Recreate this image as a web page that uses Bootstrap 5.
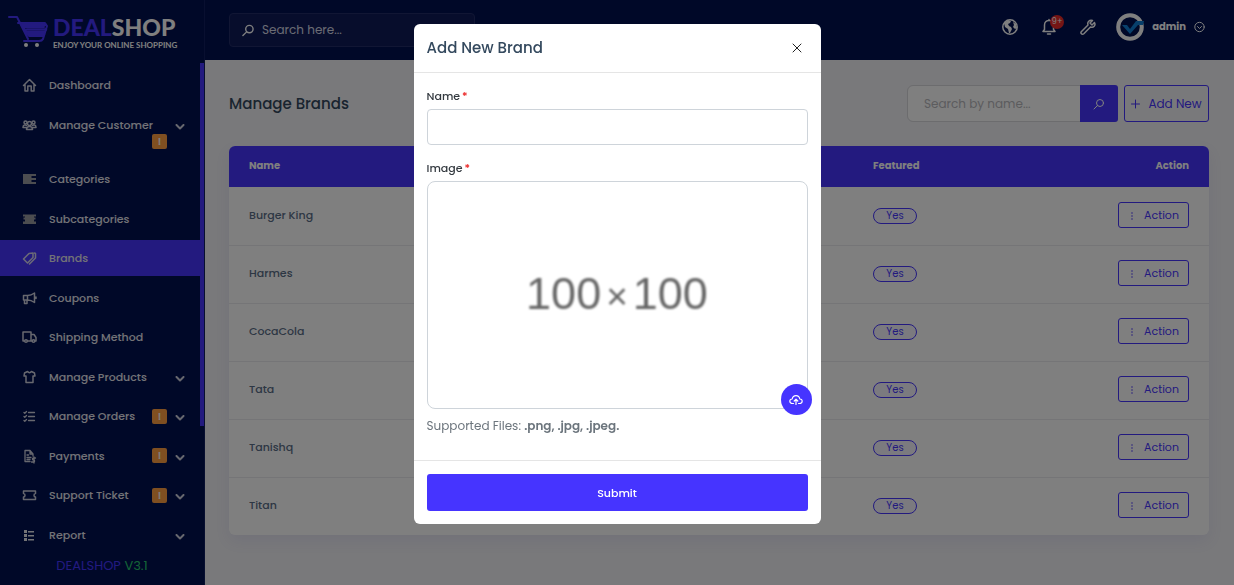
<!DOCTYPE html>
<html lang="en">
<head>
<meta charset="utf-8">
<meta name="viewport" content="width=device-width, initial-scale=1">
<title>DealShop - Manage Brands</title>
<link href="https://cdn.jsdelivr.net/npm/bootstrap@5.3.0/dist/css/bootstrap.min.css" rel="stylesheet">
<style>
:root{--brand:#4634ff;--navy:#001050}
body{font-family:Poppins,Inter,sans-serif;font-size:12px;line-height:20px;background:#f2f2f6;color:#5b6e88}
svg{fill:none;stroke:currentColor;stroke-width:1.5;stroke-linecap:round;stroke-linejoin:round;flex:none}
svg.thin{stroke-width:1}
svg.heavy{stroke-width:2}
.side{width:205px;height:100vh;background:var(--navy);border-right:1px solid #101e60;position:sticky;top:0}
.logo{height:67px;padding:13px 0 0 8px}
.logo svg{color:var(--brand);margin-top:2px}
.logo-name{font:900 23px/28px Lato,sans-serif;color:#fff}
.logo-name span{color:var(--brand)}
.logo-tag{font:700 8px/8px Lato,sans-serif;color:#fff;white-space:nowrap}
.menu{width:200px;list-style:none}
.menu a{padding:9px 15px 9px 22px;font-size:11px;font-weight:500;line-height:18px;color:#e6e6ee;text-decoration:none}
.menu a>span{width:122px}
.menu .active{background:var(--brand)}
.menu svg{opacity:.9}
.alert-dot{width:15px;height:15px;line-height:15px;background:#ff9f43;color:#fff;border-radius:2px;font-size:10px;font-weight:600;text-align:center}
.rail{right:0;top:63px;width:4px;height:62%;background:var(--brand)}
.version{height:32px;line-height:26px;font-size:13px;color:var(--brand)}
.version span{color:#28c76f}
.topbar{height:60px;background:var(--navy);padding:0 29px 0 24px;color:#fff}
.top-search{width:246px;height:34px;background:#0e1a58;border:1px solid #222d68;border-radius:4px;padding:0 12px}
.top-search input{color:#fff;background:none;border:0;outline:0;font-size:12px;min-width:0;padding:0}
.top-search input::placeholder{color:#d6d9e6}
.tools{margin-bottom:6px}
.icon-btn{background:none;border:0;padding:0;color:#fff;line-height:0}
.count{left:8px;top:-3px;width:14px;height:14px;line-height:14px;border-radius:50%;background:#ea2a2a;color:#fff;font-size:8px;text-align:center}
.admin{font-size:10px;font-weight:700}
.page{padding:25px 25px 25px 24px}
.page-title{font-size:15px;line-height:20px;font-weight:500;color:#34495e}
.find{width:211px;height:37px;margin-right:6px}
.find .form-control{font-size:12px;border:1px solid #d8d8dc;padding:0 16px}
.find .form-control::placeholder{color:#b8b8bd}
.btn{--bs-btn-font-size:12px;--bs-btn-border-radius:3px;line-height:18px}
.btn-brand{background:var(--brand);color:#fff}
.btn-line{border:1px solid var(--brand);color:var(--brand)}
.add{height:37px;width:85px;padding:0}
.brand-card{background:#fff;border-radius:6px;overflow:hidden;box-shadow:0 6px 15px #503cc814}
.brand-card table{--bs-table-color:#5b6e88;font-size:11px;font-weight:500;table-layout:fixed}
.brand-card th{background:var(--brand);color:#fff;height:41px;font-size:10px;font-weight:700;padding:0 20px 2px;border:0;vertical-align:middle;width:178px}
.brand-card td{height:58px;padding:0 20px 2px;border-bottom:1px solid #ebebef}
.brand-card tr:last-child td{border:0}
.brand-card th:first-child{width:auto}
.yes{display:block;width:44px;height:16px;line-height:13px;border:1px solid var(--brand);color:var(--brand);border-radius:8px;text-align:center;font-size:10px;font-weight:400;background:#f6f5ff;margin-top:2px}
.act{--bs-btn-font-size:11px;width:71px;height:26px;padding:0}
.modal-backdrop{--bs-backdrop-opacity:.5}
.modal-dialog{max-width:407px;margin:24px auto}
.modal-content{border:0;border-radius:6px}
.modal-header{height:49px;padding:0 13px;border-color:#e5e5e5}
.modal-title{font-size:15px;line-height:20px;font-weight:500;color:#34495e}
.close-x{width:22px;height:22px;background:none;border:0;padding:0;line-height:0;color:#222}
.modal-body{padding:13px 13px 24px}
.modal-body label{font-size:11px;font-weight:500;color:#343a40;display:block;margin-bottom:3px;line-height:20px}
.modal-body label span{color:#eb2222;margin-left:2px}
.modal-body .form-control{height:36px;border-color:#ced4da;border-radius:4px;margin-bottom:13px}
.preview{height:228px;border:1px solid #ced4da;border-radius:8px}
.preview-text{font:45px/50px "Liberation Sans",sans-serif;color:#666;filter:blur(1px)}
.preview-text small{font-size:37px;margin:0 5px}
.upload{right:-5px;bottom:-7px;width:31px;height:31px;border-radius:50%;background:var(--brand);color:#fff;border:0;padding:0;line-height:0}
.hint{margin-top:7px;font-size:12px;color:#6c757d}
.hint b{font-weight:600}
.modal-footer{padding:13px;border-color:#e5e5e5}
.modal-footer .btn{--bs-btn-font-size:11px;height:37px;margin:0;font-weight:500}
</style>
</head>
<body class="modal-open overflow-hidden">
<div class="d-flex">
<aside class="side d-flex flex-column flex-shrink-0">
  <div class="logo d-flex">
    <svg class="heavy" width="41" height="33" viewBox="0 0 41 33"><path d="M1 2h8l11 22M10 8h27l2 3-4 13c-1 2-2 2-4 2H16M13 8l8 13h14M16 12h20M18 17h19"/><path d="M14 10h23M19 14.500h19M20 19h16" stroke-width="2.500"/><g fill="#fff" stroke="none"><circle cx="18" cy="30" r="2"/><circle cx="29" cy="30" r="2"/></g></svg>
    <div class="ms-1"><div class="logo-name"><span>DEAL</span>SHOP</div><div class="logo-tag">ENJOY YOUR ONLINE SHOPPING</div></div>
  </div>
  <ul class="menu d-flex flex-column justify-content-between flex-grow-1 p-0 m-0">
    <li><a href="#" class="d-flex"><svg width="15" height="18" viewBox="0 0 15 18"><path d="M1.500 9.500l6-6 6 6M3 8.500V15h2.800v-5h3.400v5H12V8.500"/></svg><span class="ms-2 ps-1">Dashboard</span></a></li>
    <li><a href="#" class="d-flex"><svg width="15" height="18" viewBox="0 0 15 18"><circle cx="7.500" cy="7.500" r="2"/><circle cx="3.500" cy="6.500" r="1.500"/><circle cx="11.500" cy="6.500" r="1.500"/><path d="M4.500 13.500c0-4 6-4 6 0zM1 11.500c0-2.500 2-3 3.500-2M14 11.500c0-2.500-2-3-3.500-2M1 11.500h3M11 11.500h3"/></svg><span class="ms-2 ps-1 d-flex flex-wrap me-2">Manage Customer<i class="alert-dot ms-auto fst-normal">!</i></span><svg class="heavy" width="10" height="18" viewBox="0 0 10 18"><path d="M1.500 9L5 12.500 8.500 9"/></svg></a></li>
    <li><a href="#" class="d-flex"><svg width="15" height="18" viewBox="0 0 15 18"><path d="M1 4h13v2H9.500v2H14v2H9.500v2H14v2H1z" fill="#aaa" stroke="none"/></svg><span class="ms-2 ps-1">Categories</span></a></li>
    <li><a href="#" class="d-flex"><svg width="15" height="18" viewBox="0 0 15 18"><path d="M1 4.500h13v2h-2v1h1.500v2H12v2h2v2.500H1v-2.500h2v-2H1.500v-2H3v-1H1z" fill="#aaa" stroke="none"/></svg><span class="ms-2 ps-1">Subcategories</span></a></li>
    <li><a href="#" class="d-flex active" aria-current="page"><svg width="15" height="18" viewBox="0 0 15 18"><path d="M1.500 10L7 4.500l4-.5v4.500l-5.500 5.500zM12.500 4l1 .5v4.500L7.500 15"/></svg><span class="ms-2 ps-1">Brands</span></a></li>
    <li><a href="#" class="d-flex"><svg width="15" height="18" viewBox="0 0 15 18"><path d="M1.500 6.500h4c3 0 5-1 7-2.500v9.500c-2-1.500-4-2.500-7-2.500h-4zM5.500 6.500V11M2.500 11v3.500h2.500V11M14 8v1.500"/></svg><span class="ms-2 ps-1">Coupons</span></a></li>
    <li><a href="#" class="d-flex"><svg width="15" height="18" viewBox="0 0 15 18"><path d="M2.500 13H1V4h8v9H5.500M9 6.500h3l2 3V13h-1M9 13h1.500"/><circle cx="4" cy="13" r="1.300"/><circle cx="11.500" cy="13" r="1.300"/></svg><span class="ms-2 ps-1">Shipping Method</span></a></li>
    <li><a href="#" class="d-flex"><svg width="15" height="18" viewBox="0 0 15 18"><path d="M5.500 3.500L2.500 5 2 8h2v6.500h7V8h2l-.5-3-3-1.500c-1 1.500-3 1.500-4 0z"/></svg><span class="ms-2 ps-1 me-2">Manage Products</span><svg class="heavy" width="10" height="18" viewBox="0 0 10 18"><path d="M1.500 9L5 12.500 8.500 9"/></svg></a></li>
    <li><a href="#" class="d-flex"><svg width="15" height="18" viewBox="0 0 15 18"><path d="M6.500 5.500h6M6.500 9.500h6M6.500 13.500h6M2 5.500l.8.800L4.500 4.500M2 9.500l.8.800 1.700-1.800M2 13.500l.8.800 1.700-1.800" stroke-width="1.300"/></svg><span class="ms-2 ps-1 me-2 d-flex align-items-center">Manage Orders<i class="alert-dot ms-auto fst-normal">!</i></span><svg class="heavy" width="10" height="18" viewBox="0 0 10 18"><path d="M1.500 9L5 12.500 8.500 9"/></svg></a></li>
    <li><a href="#" class="d-flex"><svg width="15" height="18" viewBox="0 0 15 18"><path stroke-width="1.300" d="M8 14.500H3V3.500h5L11 7v2M8 3.500V7h3M5 8h1.500M5 10.500h4M5 12.500h3M13.500 11h-2c-1.500 0-1.500 2 0 2s1.500 2 0 2h-2M12 10v6"/></svg><span class="ms-2 ps-1 me-2 d-flex align-items-center">Payments<i class="alert-dot ms-auto fst-normal">!</i></span><svg class="heavy" width="10" height="18" viewBox="0 0 10 18"><path d="M1.500 9L5 12.500 8.500 9"/></svg></a></li>
    <li><a href="#" class="d-flex"><svg width="15" height="18" viewBox="0 0 15 18"><path d="M1.500 5h12v2.500c-2 0-2 3.500 0 3.500v2.500h-12V11c2 0 2-3.500 0-3.500z"/></svg><span class="ms-2 ps-1 me-2 d-flex align-items-center">Support Ticket<i class="alert-dot ms-auto fst-normal">!</i></span><svg class="heavy" width="10" height="18" viewBox="0 0 10 18"><path d="M1.500 9L5 12.500 8.500 9"/></svg></a></li>
    <li><a href="#" class="d-flex"><svg width="15" height="18" viewBox="0 0 15 18"><path d="M2 4h3v3H2zM2 8h3v3H2zM2 12h3v3H2zM6 5h6v1.500H6zM6 9h6v1.500H6zM6 13h6v1.500H6z" fill="#fff" stroke="none"/></svg><span class="ms-2 ps-1 me-2">Report</span><svg class="heavy" width="10" height="18" viewBox="0 0 10 18"><path d="M1.500 9L5 12.500 8.500 9"/></svg></a></li>
  </ul>
  <div class="version text-center">DEALSHOP <span>V3.1</span></div>
  <div class="rail position-absolute"></div>
</aside>
<div class="flex-grow-1">
  <header class="topbar d-flex align-items-center">
    <div class="top-search d-flex align-items-center gap-2">
      <svg width="12" height="13" viewBox="0 0 13 14"><circle cx="8" cy="5.500" r="4"/><path d="M5 8.500L1 12.500"/></svg>
      <input type="search" class="flex-grow-1" placeholder="Search here..." aria-label="Search">
    </div>
    <div class="tools d-flex align-items-center ms-auto">
    <button class="icon-btn" aria-label="Website"><svg width="16" height="16" viewBox="0 0 16 16"><circle cx="8" cy="8" r="7.200"/><path d="M2 4l4-3 3 1-1 2-2 1 1 2 2 1 1 2-2 4H7l-1-4-3-2zM11 3l3 2 1 4-2 1-2-2 1-2z" fill="#fff" stroke="none"/></svg></button>
    <button class="icon-btn position-relative ms-4" aria-label="Notifications"><svg width="14" height="18" viewBox="0 0 14 18"><path d="M1 13.500h12l-1.500-2V7c0-6-9-6-9 0v4.500zM7 1.500V2.500M5.500 16h3"/></svg><span class="count position-absolute">9+</span></button>
    <button class="icon-btn ms-4" aria-label="Settings"><svg width="16" height="17" viewBox="0 0 16 17"><path d="M14.500 3.500L12 6l-2-2 2.500-2.500C9.500.500 7 3 8 6L1.500 12.500c-1.500 1.500.5 4 2.300 2.300L10.500 8c3 1.200 5.500-1.500 4-4.500z"/></svg></button>
    <button class="icon-btn d-flex align-items-center gap-2 ms-3" aria-label="Account"><svg class="ms-1" width="28" height="30" viewBox="0 0 28 30"><circle cx="14" cy="15" r="11.800" stroke="#fff" stroke-width="4" fill="#001050"/><path d="M6 13h5l3 4 6-8h8l-1 4-5 0-8 9z" fill="#1181d8" stroke="none"/></svg><span class="admin">admin</span><svg class="thin" width="11" height="12" viewBox="0 0 11 12"><circle cx="5.500" cy="6" r="4.700"/><path d="M3.500 5.500l2 2 2-2"/></svg></button>
    </div>
  </header>
  <main class="page">
    <div class="d-flex align-items-center mb-4">
      <h1 class="page-title m-0 me-auto">Manage Brands</h1>
      <div class="find input-group">
        <input type="search" class="form-control" placeholder="Search by name..." aria-label="Search by name">
        <button class="btn btn-brand" aria-label="Search"><svg class="thin" width="12" height="12" viewBox="0 0 12 12"><circle cx="7" cy="5" r="3.500"/><path d="M4.500 7.500L1 11"/></svg></button>
      </div>
      <button class="btn btn-line add"><svg class="thin me-2" width="9" height="10" viewBox="0 0 9 10"><path d="M4.500 1v8M.5 5h8"/></svg>Add New</button>
    </div>
    <div class="brand-card">
      <table class="table align-middle m-0">
        <thead><tr><th>Name</th><th>Featured</th><th class="text-end">Action</th></tr></thead>
        <tbody>
        <tr><td>Burger King</td><td><span class="yes">Yes</span></td><td class="text-end"><button class="btn btn-line act"><svg class="me-2" width="8" height="12" viewBox="0 0 8 12"><path d="M4 3v0M4 6v0M4 9v0"/></svg>Action</button></td></tr>
        <tr><td>Harmes</td><td><span class="yes">Yes</span></td><td class="text-end"><button class="btn btn-line act"><svg class="me-2" width="8" height="12" viewBox="0 0 8 12"><path d="M4 3v0M4 6v0M4 9v0"/></svg>Action</button></td></tr>
        <tr><td>CocaCola</td><td><span class="yes">Yes</span></td><td class="text-end"><button class="btn btn-line act"><svg class="me-2" width="8" height="12" viewBox="0 0 8 12"><path d="M4 3v0M4 6v0M4 9v0"/></svg>Action</button></td></tr>
        <tr><td>Tata</td><td><span class="yes">Yes</span></td><td class="text-end"><button class="btn btn-line act"><svg class="me-2" width="8" height="12" viewBox="0 0 8 12"><path d="M4 3v0M4 6v0M4 9v0"/></svg>Action</button></td></tr>
        <tr><td>Tanishq</td><td><span class="yes">Yes</span></td><td class="text-end"><button class="btn btn-line act"><svg class="me-2" width="8" height="12" viewBox="0 0 8 12"><path d="M4 3v0M4 6v0M4 9v0"/></svg>Action</button></td></tr>
        <tr><td>Titan</td><td><span class="yes">Yes</span></td><td class="text-end"><button class="btn btn-line act"><svg class="me-2" width="8" height="12" viewBox="0 0 8 12"><path d="M4 3v0M4 6v0M4 9v0"/></svg>Action</button></td></tr>
        </tbody>
      </table>
    </div>
  </main>
</div>
</div>
<div class="modal-backdrop show"></div>
<div class="modal show d-block" tabindex="-1" role="dialog" aria-labelledby="brandTitle">
  <div class="modal-dialog">
    <form class="modal-content">
      <div class="modal-header"><h2 class="modal-title" id="brandTitle">Add New Brand</h2><button type="button" class="close-x" aria-label="Close"><svg class="thin" width="10" height="10" viewBox="0 0 10 10"><path d="M1 1l8 8M9 1L1 9"/></svg></button></div>
      <div class="modal-body">
        <label for="brandName">Name<span>*</span></label>
        <input id="brandName" type="text" class="form-control">
        <label for="brandImage">Image<span>*</span></label>
        <div class="preview position-relative d-flex align-items-center justify-content-center">
          <span class="preview-text">100<small>×</small>100</span>
          <button type="button" id="brandImage" class="upload position-absolute" aria-label="Upload image"><svg width="14" height="14" viewBox="0 0 14 14"><path d="M4.500 10.500H3.500C0 10.500 0 6 3.200 6 4 1.500 10 1.500 10.800 6 14 6 14 10.500 10.500 10.500h-1M7 11.500V6.500M5.200 8L7 6.200 8.800 8" stroke-width="1.200"/></svg></button>
        </div>
        <div class="hint">Supported Files: <b>.png, .jpg, .jpeg.</b></div>
      </div>
      <div class="modal-footer"><button type="submit" class="btn btn-brand w-100">Submit</button></div>
    </form>
  </div>
</div>
<script src="https://cdn.jsdelivr.net/npm/bootstrap@5.3.0/dist/js/bootstrap.bundle.min.js"></script>
</body>
</html>
